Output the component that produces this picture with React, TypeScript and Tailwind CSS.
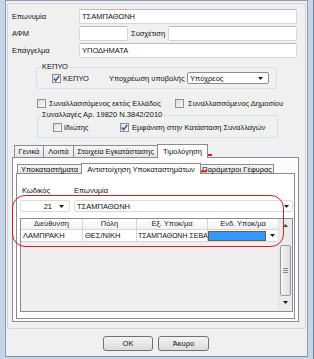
import React from "react"

type Kids = { className?: string; children?: React.ReactNode }

function TextBox({ className = "", children }: Kids) {
  return (
    <div className={`h-[15px] border border-[#d3d7de] border-t-[#b5b9c1] rounded-[2px] bg-white flex items-center px-[2px] ${className}`}>
      {children}
    </div>
  )
}

function Arrow({ className = "" }: { className?: string }) {
  return (
    <svg width="5" height="3" viewBox="0 0 5 3" className={className}>
      <path d="M0 0 L5 0 L2.5 3 Z" fill="#1e1e1e" />
    </svg>
  )
}

function Check({ checked }: { checked?: boolean }) {
  return (
    <span className="w-[9px] h-[9px] border border-[#8e8f8f] bg-gradient-to-br from-[#d9dbde] to-[#fbfbfb] flex items-center justify-center shrink-0">
      {checked && (
        <svg width="7" height="7" viewBox="0 0 7 7">
          <path d="M0.8 3.6 L2.7 5.6 L6.2 0.9" stroke="#2d4f9e" strokeWidth="1.4" fill="none" />
        </svg>
      )}
    </span>
  )
}

function Tab({ className = "", children, active }: Kids & { active?: boolean }) {
  return (
    <div
      className={`-ml-px first:ml-0 border border-b-0 border-[#898c95] flex items-center justify-center whitespace-nowrap ${
        active ? "h-[14px] bg-white relative z-10 -mb-px" : "h-[12px] bg-gradient-to-b from-[#f7f7f7] to-[#e6e6e6]"
      } ${className}`}
    >
      {children}
    </div>
  )
}

export default function App() {
  return (
    <div className="relative w-[314px] h-[359px] overflow-hidden bg-[#c5d5e6] border-r border-[#6f849c] pl-[5px] font-['Liberation_Sans',Arial,sans-serif] text-[7.5px] leading-[9px] text-[#111]">
      <div className="w-[303px] h-[357px] bg-[#f0f0f0] border border-t-[#8a9db3] border-x-[#8a9db3] border-b-[#7e93ab] flex flex-col">
        {/* main panel */}
        <div className="mx-[1px] mt-[2px] h-[326px] border border-[#d5d5d5] rounded-[2px] pt-[5px] pl-[4px]">
          <div className="flex items-center h-[15px]">
            <span className="w-[67px]">Επωνυμία</span>
            <TextBox className="w-[218px]">ΤΣΑΜΠΑΘΩΝΗ</TextBox>
          </div>
          <div className="flex items-center h-[15px] mt-[2px]">
            <span className="w-[67px]">ΑΦΜ</span>
            <TextBox className="w-[49px]" />
            <span className="w-[37px] ml-[3px]">Συσχέτιση</span>
            <TextBox className="w-[129px]" />
          </div>
          <div className="flex items-center h-[15px] mt-[2px]">
            <span className="w-[67px]">Επάγγελμα</span>
            <TextBox className="w-[218px]">ΥΠΟΔΗΜΑΤΑ</TextBox>
          </div>

          {/* ΚΕΠΥΟ group */}
          <div className="relative ml-[24px] mt-[9px] w-[241px] h-[22px] border border-[#d5dfe5] rounded-[3px] flex items-center pl-[15px]">
            <span className="absolute -top-[6px] left-[4px] px-[1px] bg-[#f0f0f0]">ΚΕΠΥΟ</span>
            <div className="flex items-center gap-[2px] w-[57px]">
              <Check checked />
              <span>ΚΕΠΥΟ</span>
            </div>
            <span className="w-[78px] whitespace-nowrap">Υποχρέωση υποβολής</span>
            <div className="w-[82px] h-[12px] border border-[#8d8d8d] rounded-[2px] bg-white flex items-center justify-between pl-[2px] pr-[5px]">
              <span>Υπόχρεος</span>
              <Arrow />
            </div>
          </div>

          <div className="flex items-center ml-[25px] mt-[10px] h-[9px]">
            <div className="flex items-center gap-[3px] w-[138px]">
              <Check />
              <span className="whitespace-nowrap">Συναλλασσόμενος εκτός Ελλάδος</span>
            </div>
            <div className="flex items-center gap-[4px]">
              <Check />
              <span className="whitespace-nowrap">Συναλλασσόμενος Δημοσίου</span>
            </div>
          </div>

          {/* Συναλλαγές group */}
          <div className="relative ml-[25px] mt-[7px] w-[241px] h-[23px] border border-[#d5dfe5] rounded-[3px] flex items-center pl-[15px] pt-[2px]">
            <span className="absolute -top-[6px] left-[3px] px-[1px] bg-[#f0f0f0] whitespace-nowrap">
              Συναλλαγές Αρ. 19820 Ν.3842/2010
            </span>
            <div className="flex items-center gap-[2px] w-[67px]">
              <Check />
              <span>Ιδιώτης</span>
            </div>
            <div className="flex items-center gap-[3px]">
              <Check checked />
              <span className="whitespace-nowrap">Εμφάνιση στην Κατάσταση Συναλλαγών</span>
            </div>
          </div>

          {/* outer tabs */}
          <div className="mt-[5px] w-[287px]">
            <div className="flex items-end h-[14px] pl-[2px]">
              <Tab className="w-[30px]">Γενικά</Tab>
              <Tab className="w-[31px]">Λοιπά</Tab>
              <Tab className="w-[85px]">Στοιχεία Εγκατάστασης</Tab>
              <Tab className="w-[51px]" active>Τιμολόγηση</Tab>
            </div>
            <div className="h-[165px] border border-[#898c95] bg-[#fcfcfc] pt-[4px] pl-[3px]">
              {/* inner tabs */}
              <div className="flex items-end h-[11px] pl-[1px]">
                <Tab className="w-[65px] !h-[9px]">Υποκαταστήματα</Tab>
                <Tab className="w-[120px] !h-[11px]" active>Αντιστοίχηση Υποκαταστημάτων</Tab>
                <Tab className="w-[74px] !h-[9px]">Παράμετροι Γέφυρας</Tab>
              </div>
              <div className="w-[279px] h-[146px] border border-[#898c95] bg-white pt-[12px]">
                <div className="flex h-[9px] pl-[5px]">
                  <span className="w-[52px]">Κωδικός</span>
                  <span>Επωνυμία</span>
                </div>
                <div className="flex mt-[5px] pl-[3px] gap-[4px]">
                  <div className="w-[50px] h-[12px] border border-[#d8dce2] rounded-[2px] bg-white flex items-center justify-end pr-[5px] gap-[7px]">
                    <span>21</span>
                    <Arrow />
                  </div>
                  <div className="w-[219px] h-[12px] border border-[#d8dce2] rounded-[2px] bg-white flex items-center justify-between pl-[2px] pr-[3px]">
                    <span>ΤΣΑΜΠΑΘΩΝΗ</span>
                    <Arrow />
                  </div>
                </div>

                {/* grid */}
                <div className="ml-[3px] mt-[6px] w-[273px] h-[94px] border border-[#8c8c8c] flex bg-[#efefef]">
                  <div className="w-[257px] flex flex-col">
                    <div className="flex h-[11px] bg-gradient-to-b from-white to-[#f1f2f4] border-b border-[#d5d5d5] text-[#222]">
                      <span className="w-[62px] border-r border-[#d5d5d5] text-center">Διεύθυνση</span>
                      <span className="w-[54px] border-r border-[#d5d5d5] text-center">Πόλη</span>
                      <span className="w-[71px] border-r border-[#d5d5d5] text-center">Εξ. Υποκ/μα</span>
                      <span className="w-[70px] text-center">Ενδ. Υποκ/μα</span>
                    </div>
                    <div className="flex h-[12px] items-center bg-white border-b border-[#d5d5d5]">
                      <span className="w-[62px] h-full flex items-center pl-[2px] border-r border-[#d5d5d5]">ΛΑΜΠΡΑΚΗ</span>
                      <span className="w-[54px] h-full flex items-center pl-[2px] border-r border-[#d5d5d5]">ΘΕΣ/ΝΙΚΗ</span>
                      <span className="w-[71px] h-full flex items-center pl-[1px] border-r border-[#d5d5d5] whitespace-nowrap text-[7px]">
                        ΤΣΑΜΠΑΘΩΝΗ ΣΕΒΑ
                      </span>
                      <span className="w-[70px] h-full flex items-center">
                        <span className="w-[58px] h-[10px] bg-[#3399ff] border border-[#7a5a3a]" />
                        <Arrow className="ml-[4px]" />
                      </span>
                    </div>
                  </div>
                  {/* scrollbar */}
                  <div className="w-[14px] flex flex-col items-center bg-[#ebebeb] border-l border-[#e0e0e0]">
                    <svg width="5" height="3" viewBox="0 0 5 3" className="mt-[5px]">
                      <path d="M0 3 L5 3 L2.5 0 Z" fill="#444" />
                    </svg>
                    <div className="mt-[18px] w-[11px] h-[51px] border border-[#9a9a9a] rounded-[2px] bg-gradient-to-r from-[#f3f3f3] to-[#dedede] flex flex-col items-center justify-center gap-[1px]">
                      <span className="w-[5px] h-px bg-[#8a8a8a]" />
                      <span className="w-[5px] h-px bg-[#8a8a8a]" />
                      <span className="w-[5px] h-px bg-[#8a8a8a]" />
                    </div>
                    <Arrow className="mt-[5px]" />
                  </div>
                </div>
              </div>
            </div>
          </div>
        </div>

        {/* buttons */}
        <div className="flex justify-center gap-[5px] mt-[7px] pr-[1px]">
          <button className="w-[50px] h-[15px] border border-[#707070] rounded-[3px] bg-gradient-to-b from-[#f3f3f3] to-[#dcdcdc] flex items-center justify-center">
            OK
          </button>
          <button className="w-[51px] h-[15px] border border-[#707070] rounded-[3px] bg-gradient-to-b from-[#f3f3f3] to-[#dcdcdc] flex items-center justify-center">
            Άκυρο
          </button>
        </div>
      </div>

      {/* red annotations */}
      <div className="absolute left-[12px] top-[195px] w-[272px] h-[52px] border-[1.5px] border-[#cf1f2a] rounded-[13px]" />
      <div className="absolute left-[160px] top-[154px] w-[52px] h-[1.5px] bg-[#cf1f2a]" />
      <div className="absolute left-[85px] top-[171px] w-[122px] h-[1.5px] bg-[#cf1f2a] -rotate-[0.6deg]" />
    </div>
  )
}
